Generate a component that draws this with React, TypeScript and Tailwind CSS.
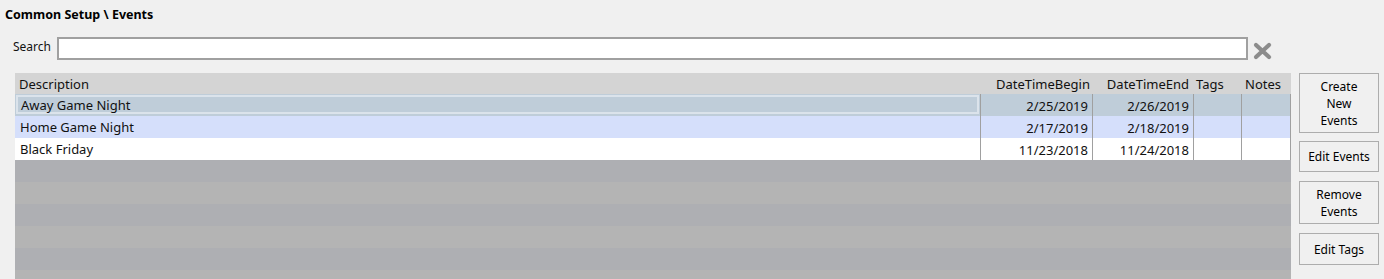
import React from 'react';

type Row = { desc: string; begin: string; end: string; bg: string; focus?: boolean };

const rows: Row[] = [
  { desc: 'Away Game Night', begin: '2/25/2019', end: '2/26/2019', bg: 'bg-[#bfcdd9]', focus: true },
  { desc: 'Home Game Night', begin: '2/17/2019', end: '2/18/2019', bg: 'bg-[#d5dffb]' },
  { desc: 'Black Friday', begin: '11/23/2018', end: '11/24/2018', bg: 'bg-white' },
];

const fillers = ['bg-[#aeafb3]', 'bg-[#b4b4b4]', 'bg-[#aeafb3]', 'bg-[#b4b4b4]', 'bg-[#aeafb3]', 'bg-[#b4b4b4]'];

function SideButton({ lines, className = '' }: { lines: string[]; className?: string }) {
  return (
    <button
      type="button"
      className={`w-[80px] border border-[#adadad] bg-[#f0f0f0] text-[12px] leading-[17px] text-black flex flex-col items-center justify-center ${className}`}
    >
      {lines.map((l) => (
        <span key={l}>{l}</span>
      ))}
    </button>
  );
}

export default function App() {
  return (
    <div
      className="w-[1384px] h-[279px] overflow-hidden bg-[#f0f0f0] text-[#111]"
      style={{ fontFamily: '"Noto Sans", "Open Sans", sans-serif' }}
    >
      <div className="pl-[5px] pt-[6px] h-[37px] text-[12.5px] font-bold text-black leading-[18px]">
        Common Setup \ Events
      </div>

      <div className="flex items-center h-[23px]">
        <span className="pl-[13px] w-[57px] text-[12px] leading-[16px] -mt-[4px]">Search</span>
        <input
          type="text"
          className="w-[1191px] h-[23px] border-2 border-[#a0a0a0] bg-white outline-none"
        />
        <svg className="ml-[5px] mt-[4px]" width="19" height="18" viewBox="0 0 19 18">
          <path d="M3 3 L16 15 M16 3 L3 15" stroke="#8c8c8c" strokeWidth="4.2" strokeLinecap="round" />
        </svg>
      </div>

      <div className="flex mt-[13px]">
        <div className="ml-[15px] w-[1276px] flex flex-col text-[13px] leading-[18px]">
          <div className="flex h-[21px] bg-[#d4d4d4] items-center">
            <div className="w-[965px] pl-[4px]">Description</div>
            <div className="w-[112px] text-right pr-[2px]">DateTimeBegin</div>
            <div className="w-[101px] text-right pr-[4px]">DateTimeEnd</div>
            <div className="w-[48px] pl-[3px]">Tags</div>
            <div className="w-[50px] pl-[4px]">Notes</div>
          </div>
          {rows.map((r) => (
            <div key={r.desc} className={`flex h-[22px] pt-[1px] ${r.bg}`}>
              <div className="w-[965px] h-full p-[1px] -mt-[1px]">
                <div
                  className={`h-full flex items-center pt-[1px] ${r.focus ? 'border-2 border-[#dbe3eb] pl-[3px]' : 'pl-[4px]'}`}
                >
                  {r.desc}
                </div>
              </div>
              <div className="w-[112px] -mt-[1px] border-l border-[#a0a0a0] flex items-center justify-end pr-[4px] pt-[2px]">{r.begin}</div>
              <div className="w-[101px] -mt-[1px] border-l border-[#a0a0a0] flex items-center justify-end pr-[4px] pt-[2px]">{r.end}</div>
              <div className="w-[48px] -mt-[1px] border-l border-[#a0a0a0]" />
              <div className="w-[50px] -mt-[1px] border-l border-r border-[#a0a0a0]" />
            </div>
          ))}
          {fillers.map((f, i) => (
            <div key={i} className={`h-[22px] ${f}`} />
          ))}
        </div>

        <div className="ml-[8px] flex flex-col">
          <SideButton lines={['Create', 'New', 'Events']} className="h-[60px]" />
          <SideButton lines={['Edit Events']} className="h-[31px] mt-[8px]" />
          <SideButton lines={['Remove', 'Events']} className="h-[43px] mt-[9px]" />
          <SideButton lines={['Edit Tags']} className="h-[32px] mt-[9px]" />
        </div>
      </div>
    </div>
  );
}
